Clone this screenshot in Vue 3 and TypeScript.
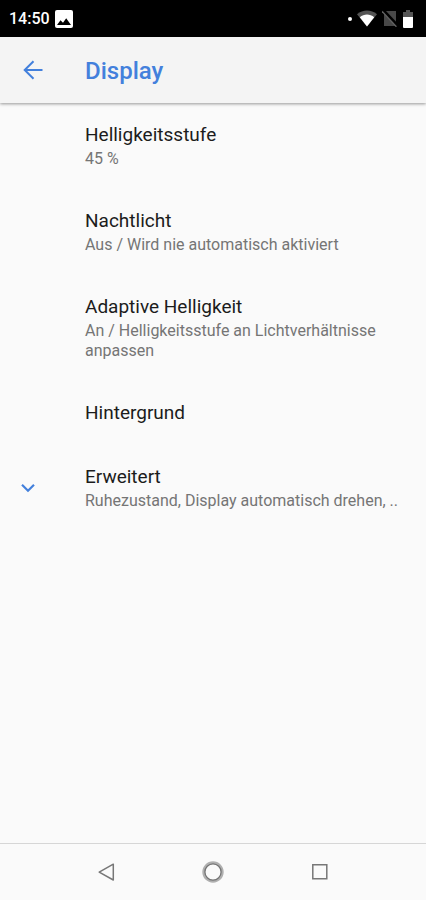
<script setup lang="ts">
interface Setting {
  title: string
  summary?: string
  expandable?: boolean
}

const settings: Setting[] = [
  { title: 'Helligkeitsstufe', summary: '45 %' },
  { title: 'Nachtlicht', summary: 'Aus / Wird nie automatisch aktiviert' },
  { title: 'Adaptive Helligkeit', summary: 'An / Helligkeitsstufe an Lichtverhältnisse anpassen' },
  { title: 'Hintergrund' },
  { title: 'Erweitert', summary: 'Ruhezustand, Display automatisch drehen, ..', expandable: true },
]
</script>

<template>
  <div class="screen">
    <div class="status">
      <div class="group">
        <span class="clock">14:50</span>
        <svg width="18" height="18" viewBox="0 0 18 18">
          <rect width="18" height="18" rx="2" fill="#fff" />
          <path d="M2 15 5.5 10.2 8 12.8 11.2 8.2 16 15Z" fill="#000" />
        </svg>
      </div>
      <div class="group icons">
        <svg width="4" height="4" viewBox="0 0 4 4"><circle cx="2" cy="2" r="2" fill="#fff" /></svg>
        <svg width="20" height="17" viewBox="0 0 20 17">
          <path d="M0 4.2C6 -.7 14 -.7 20 4.2L10 16.5Z" fill="#555" />
          <path d="M2.8 7.2C7 3.6 13 3.6 17.2 7.2L10 16.5Z" fill="#fff" />
        </svg>
        <svg width="16" height="17" viewBox="0 0 16 17">
          <path d="M2 1H14V16H2Z" fill="#484848" />
          <path d="M1 0 16 16" stroke="#000" stroke-width="3" />
          <path d="M0 1.2 14.4 16.8" stroke="#626262" stroke-width="1.3" />
        </svg>
        <svg width="10" height="18" viewBox="0 0 10 18">
          <path d="M3 0H7V2H10V8H0V2H3Z" fill="#555" />
          <path d="M0 7H10V17Q10 18 9 18H1Q0 18 0 17Z" fill="#fff" />
        </svg>
      </div>
    </div>

    <header class="bar">
      <button class="back" type="button" aria-label="Zurück">
        <svg width="20" height="20" viewBox="0 0 20 20" fill="none" stroke="#4380dc" stroke-width="2">
          <path d="M19.5 10H2M10.5 1.2 1.7 10 10.5 18.8" />
        </svg>
      </button>
      <h1>Display</h1>
    </header>

    <main>
      <button v-for="item in settings" :key="item.title" type="button" class="item">
        <span class="lead">
          <svg v-if="item.expandable" width="14" height="10" viewBox="0 0 14 10" fill="none" stroke="#4380dc" stroke-width="2.2">
            <path d="M1 1.8 7 7.8 13 1.8" />
          </svg>
        </span>
        <span class="text">
          <span class="title">{{ item.title }}</span>
          <span v-if="item.summary" class="summary" :class="{ single: item.expandable }">{{ item.summary }}</span>
        </span>
      </button>
    </main>

    <nav class="nav">
      <button type="button" aria-label="Zurück">
        <svg width="24" height="24" viewBox="0 0 24 24" fill="none" stroke="#777" stroke-width="1.5" stroke-linejoin="round">
          <path d="M19.3 4.2V20L5.2 12.1Z" />
        </svg>
      </button>
      <button type="button" aria-label="Startseite">
        <svg width="24" height="24" viewBox="0 0 24 24" fill="none">
          <circle cx="12" cy="12" r="9.4" stroke="#b0b0b0" stroke-width="2.6" />
          <circle cx="12" cy="12" r="8.1" stroke="#757575" stroke-width="1.3" />
        </svg>
      </button>
      <button type="button" aria-label="Übersicht">
        <svg width="24" height="24" viewBox="0 0 24 24" fill="none" stroke="#777" stroke-width="1.5">
          <path d="M4.8 4.8H18.8V18.8H4.8Z" />
        </svg>
      </button>
    </nav>
  </div>
</template>

<style>
body {
  margin: 0;
  background: #fafafa;
}
</style>

<style scoped>
.screen {
  min-height: 100vh;
  display: flex;
  flex-direction: column;
  background: #fafafa;
  color: #1c1c1c;
  font-family: Roboto, "Noto Sans", sans-serif;
}
button {
  border: 0;
  padding: 0;
  background: none;
  font: inherit;
  color: inherit;
  text-align: left;
}
svg {
  display: block;
  flex: none;
}
.status {
  height: 37px;
  box-sizing: border-box;
  padding: 0 13px 0 9px;
  display: flex;
  justify-content: space-between;
  align-items: center;
  background: #000;
  color: #fff;
}
.group {
  display: flex;
  align-items: center;
  gap: 5px;
}
.clock {
  font-size: 16px;
  line-height: 20px;
  font-weight: 500;
}
.bar {
  height: 66px;
  display: flex;
  align-items: center;
  background: #f4f4f4;
  box-shadow: 0 1px 3px rgba(0, 0, 0, 0.4);
}
.back {
  width: 85px;
  box-sizing: border-box;
  padding: 10px 0 10px 23px;
}
h1 {
  margin: 0;
  padding-top: 2px;
  font-size: 24px;
  line-height: 32px;
  font-weight: 500;
  color: #4380dc;
}
main {
  flex: 1;
}
.item {
  width: 100%;
  display: flex;
  align-items: center;
  padding: 20px 16px 20px 0;
}
.lead {
  flex: none;
  width: 85px;
  box-sizing: border-box;
  padding-left: 21px;
}
.text {
  flex: 1;
  min-width: 0;
  display: flex;
  flex-direction: column;
  gap: 2px;
}
.title {
  font-size: 19px;
  line-height: 24px;
}
.summary {
  font-size: 16px;
  line-height: 20px;
  color: #757575;
}
.single {
  white-space: nowrap;
}
.nav {
  height: 56px;
  padding: 0 53px;
  display: grid;
  grid-template-columns: repeat(3, 1fr);
  border-top: 1px solid #d6d6d6;
}
.nav button {
  display: flex;
  align-items: center;
  justify-content: center;
}
</style>
